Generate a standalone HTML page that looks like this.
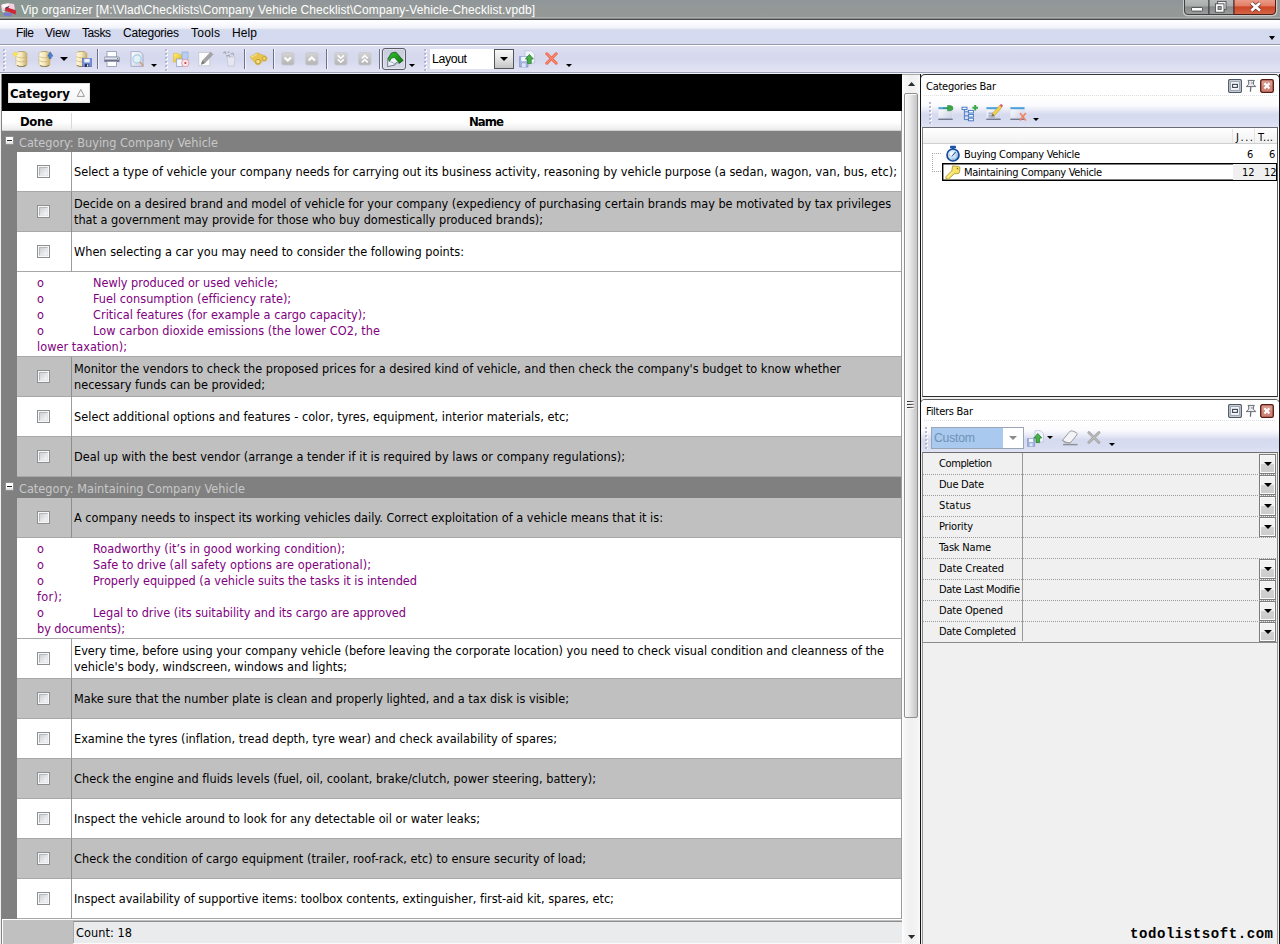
<!DOCTYPE html>
<html lang="en"><head><meta charset="utf-8"><title>Vip organizer</title>
<style>
html,body{margin:0;padding:0;}
body{width:1280px;height:944px;position:relative;overflow:hidden;background:#f0f0f0;}
#root{position:absolute;left:0;top:0;width:1280px;height:944px;overflow:hidden;}
#root div,#root span,#root svg{position:absolute;box-sizing:border-box;}
#root span{white-space:pre;}

</style></head><body><div id="root">
<svg width="0" height="0" style="left:0;top:0"><defs>
<linearGradient id="gc" x1="0" x2="1" y1="0" y2="0"><stop offset="0" stop-color="#fffbea"/><stop offset=".5" stop-color="#f5e7b8"/><stop offset="1" stop-color="#c2aa6c"/></linearGradient>
<linearGradient id="gb" x1="0" x2="0" y1="0" y2="1"><stop offset="0" stop-color="#d4d4d4"/><stop offset="1" stop-color="#b4b4b4"/></linearGradient>
<linearGradient id="gw" x1="0" x2="1" y1="0" y2="1"><stop offset="0" stop-color="#ffffff"/><stop offset="1" stop-color="#c9cfe4"/></linearGradient>
<linearGradient id="gg" x1="0" x2="1" y1="0" y2="1"><stop offset="0" stop-color="#35c235"/><stop offset="1" stop-color="#0a7a0a"/></linearGradient>
<linearGradient id="gy" x1="0" x2="1" y1="0" y2="1"><stop offset="0" stop-color="#fff27a"/><stop offset="1" stop-color="#d8a818"/></linearGradient>
<radialGradient id="gs" cx=".4" cy=".4" r=".7"><stop offset="0" stop-color="#ffffff"/><stop offset=".6" stop-color="#b8dcf8"/><stop offset="1" stop-color="#3c86d0"/></radialGradient>
</defs></svg>
<div style="left:0px;top:0px;width:1280px;height:18px;background:linear-gradient(90deg,rgba(110,150,118,.35),rgba(120,140,128,0) 5%),linear-gradient(#90959a,#949998 50%,#959a99);"></div>
<div style="left:0px;top:17px;width:1280px;height:1px;background:#a9adab;"></div>
<div style="left:0px;top:18px;width:1280px;height:1px;background:#8c8e8d;"></div>
<div style="left:0px;top:19px;width:1280px;height:1px;background:#48494a;"></div>
<svg style="left:0px;top:2px;" width="18" height="15" viewBox="0 0 18 15"><path d="M1 3 Q6 0 14 2 L15 8 Q8 5 2 9 Z" fill="#f6cfe0"/><path d="M2 2.4 L9 1.6 L8 5 L3 6Z" fill="#fff" opacity=".8"/><path d="M6 5 L16 8.6 L15.6 12.4 L5 8.4 Z" fill="#d02434"/><path d="M5.4 6.6 L9 4.4" stroke="#3a3a3a" stroke-width="1.2"/><path d="M3 10.4 L12 11.6 L11 14.4 L4 13.6 Z" fill="#7a7ad0"/><path d="M1.4 8.6 L5 8.8 L4 11 Z" fill="#f4e8f0"/></svg>
<svg style="left:1183px;top:0px;" width="95" height="17" viewBox="0 0 95 17"><defs><linearGradient id="wb" x1="0" x2="0" y1="0" y2="1"><stop offset="0" stop-color="#b9bdbc"/><stop offset=".46" stop-color="#a9adac"/><stop offset=".5" stop-color="#868a89"/><stop offset="1" stop-color="#9a9e9d"/></linearGradient>
<linearGradient id="wc" x1="0" x2="0" y1="0" y2="1"><stop offset="0" stop-color="#eda08c"/><stop offset=".46" stop-color="#e07c64"/><stop offset=".5" stop-color="#cf4424"/><stop offset="1" stop-color="#d2664a"/></linearGradient></defs>
<path d="M.5 -1 V11 Q.5 15.5 5 15.5 H89 Q93.5 15.5 93.5 11 V-1 Z" fill="none" stroke="#c8cbca" stroke-width="1.4"/>
<path d="M1.5 -1 V11 Q1.5 14.5 5 14.5 H26 V-1 Z" fill="url(#wb)" stroke="#3e4142" stroke-width="1"/>
<path d="M26 -1 V14.5 H51 V-1 Z" fill="url(#wb)" stroke="#3e4142" stroke-width="1"/>
<path d="M51 -1 V14.5 H89 Q92.5 14.5 92.5 11 V-1 Z" fill="url(#wc)" stroke="#4a2018" stroke-width="1"/>
<rect x="8.5" y="7.5" width="11" height="3.6" rx=".6" fill="#fdfdfd" stroke="#4c4f50" stroke-width=".9"/>
<rect x="34.6" y="1.4" width="8.4" height="8" fill="#f4f4f4" stroke="#4c4f50" stroke-width=".9"/>
<rect x="32.4" y="3.8" width="8.6" height="8.4" fill="#fdfdfd" stroke="#4c4f50" stroke-width=".9"/>
<rect x="35" y="6.6" width="3.2" height="2.8" fill="#9a9e9d" stroke="#4c4f50" stroke-width=".8"/>
<path d="M68.4 3 L77 10.6 M77 3 L68.4 10.6" stroke="#5a2a20" stroke-width="4.2"/>
<path d="M68.4 3 L77 10.6 M77 3 L68.4 10.6" stroke="#ffffff" stroke-width="2.8"/></svg>
<div style="left:0px;top:20px;width:1280px;height:24px;background:linear-gradient(#ffffff,#fafbfe 4px,#f1f2fa 8px,#d9deef 9.5px,#d3d9ee 12px,#d5daef);"></div>
<div style="left:0px;top:44px;width:1280px;height:1px;background:#9599b0;"></div>
<div style="left:0px;top:45px;width:1280px;height:1px;background:#ffffff;"></div>
<div style="left:0px;top:46px;width:1280px;height:26px;background:linear-gradient(#dee0f2,#d7d9ee 30%,#d6d8ee 55%,#e3e5f5);"></div>
<div style="left:0px;top:72px;width:1280px;height:1px;background:#9da1b8;"></div>
<div style="left:0px;top:73px;width:1280px;height:1px;background:#f4f4f8;"></div>
<div style="left:3px;top:49px;width:3px;height:22px;background-image:radial-gradient(circle at 1px 1px,#b4b8d0 0,#b4b8d0 .8px,transparent 1.1px),radial-gradient(circle at 2px 2px,#ffffff 0,#ffffff .9px,transparent 1.2px);background-size:3px 4px;"></div>
<svg style="left:12px;top:51px;" width="16" height="16" viewBox="0 0 16 16"><path d="M4 2.5 C4 -0.3 15 -0.3 15 2.5 V13.5 C15 16.3 4 16.3 4 13.5 Z" fill="url(#gc)" stroke="#c8b070" stroke-width=".6"/><path d="M4.5 5.5 C6 7.3 13 7.3 14.5 5.5 M4.5 9.5 C6 11.3 13 11.3 14.5 9.5" fill="none" stroke="#cdb068" stroke-width=".9" opacity=".8"/><path d="M5 14.3 C7 16 12 16 14 14.3" fill="none" stroke="#6e6340" stroke-width="1" opacity=".75"/><path d="M6.5 1 C8 .2 11 .2 12.5 1" fill="none" stroke="#9c8a5a" stroke-width=".8" opacity=".7"/><path d="M3.2 0.3 L4.1 2.6 L6.6 3.2 L4.1 3.9 L3.2 6.3 L2.4 3.9 L0 3.2 L2.4 2.6 Z" fill="#ffe94a" stroke="#f0d23a" stroke-width=".4"/></svg>
<svg style="left:38px;top:51px;" width="16" height="16" viewBox="0 0 16 16"><path d="M1 2.5 C1 -0.3 12 -0.3 12 2.5 V13.5 C12 16.3 1 16.3 1 13.5 Z" fill="url(#gc)" stroke="#c8b070" stroke-width=".6"/><path d="M1.5 5.5 C3 7.3 10 7.3 11.5 5.5 M1.5 9.5 C3 11.3 10 11.3 11.5 9.5" fill="none" stroke="#cdb068" stroke-width=".9" opacity=".8"/><path d="M2 14.3 C4 16 9 16 11 14.3" fill="none" stroke="#6e6340" stroke-width="1" opacity=".75"/><path d="M3.5 1 C5 .2 8 .2 9.5 1" fill="none" stroke="#9c8a5a" stroke-width=".8" opacity=".7"/><path d="M12.2 0.8 L15 5.2 L13.2 5.2 L13.2 7.6 L11 7.6 L11 5.2 L9.6 5.2 Z" fill="#4a7fd0" stroke="#2d5aa8" stroke-width=".5"/></svg>
<div style="left:60px;top:57px;width:0px;height:0px;border-left:4.0px solid transparent;border-right:4.0px solid transparent;border-top:4px solid #000;"></div>
<svg style="left:76px;top:51px;" width="16" height="16" viewBox="0 0 16 16"><path d="M0 2.5 C0 -0.3 11 -0.3 11 2.5 V13.5 C11 16.3 0 16.3 0 13.5 Z" fill="url(#gc)" stroke="#c8b070" stroke-width=".6"/><path d="M0.5 5.5 C2 7.3 9 7.3 10.5 5.5 M0.5 9.5 C2 11.3 9 11.3 10.5 9.5" fill="none" stroke="#cdb068" stroke-width=".9" opacity=".8"/><path d="M1 14.3 C3 16 8 16 10 14.3" fill="none" stroke="#6e6340" stroke-width="1" opacity=".75"/><path d="M2.5 1 C4 .2 7 .2 8.5 1" fill="none" stroke="#9c8a5a" stroke-width=".8" opacity=".7"/><rect x="6.5" y="7.5" width="9" height="8.5" fill="#7890d8" stroke="#5068b4" stroke-width=".6"/><rect x="8.3" y="7.8" width="5.4" height="3.6" fill="#eef2fc"/><rect x="8.8" y="12.8" width="4.4" height="3.2" fill="#27305c"/><rect x="11" y="13.4" width="1.4" height="2.2" fill="#e8ecf8"/></svg>
<div style="left:97px;top:49px;width:1px;height:20px;background:#6c7088;"></div>
<div style="left:98px;top:49px;width:1px;height:20px;background:rgba(255,255,255,.7);"></div>
<svg style="left:104px;top:51px;" width="16" height="16" viewBox="0 0 16 16"><rect x="3" y="0.6" width="9.4" height="5.4" fill="#fff" stroke="#8c94b4" stroke-width=".8"/><path d="M1 6 H14.4 Q15.4 6 15.4 7 V10.6 H0.2 V7 Q0.2 6 1 6Z" fill="#dfe3f0" stroke="#7a829c" stroke-width=".7"/><rect x="0.6" y="8.6" width="14.4" height="2" fill="#6a6f86"/><rect x="3" y="10.4" width="9.4" height="5" fill="#fff" stroke="#8c94b4" stroke-width=".8"/><rect x="13" y="7" width="1.2" height="1" fill="#4aa04a"/></svg>
<svg style="left:129px;top:51px;" width="16" height="16" viewBox="0 0 16 16"><path d="M2 .6 H11 L14 3.4 V15.4 H2 Z" fill="url(#gw)" stroke="#9aa2c0" stroke-width=".8"/><circle cx="8" cy="8" r="4.1" fill="#e2f1f8" stroke="#a4cde4" stroke-width="1.2" opacity=".95"/><path d="M11 11.2 L14.2 14.6" stroke="#d0a070" stroke-width="1.5" stroke-linecap="round"/></svg>
<div style="left:151px;top:64px;width:0px;height:0px;border-left:3.0px solid transparent;border-right:3.0px solid transparent;border-top:3px solid #000;"></div>
<div style="left:165px;top:49px;width:3px;height:22px;background-image:radial-gradient(circle at 1px 1px,#b4b8d0 0,#b4b8d0 .8px,transparent 1.1px),radial-gradient(circle at 2px 2px,#ffffff 0,#ffffff .9px,transparent 1.2px);background-size:3px 4px;"></div>
<svg style="left:173px;top:51px;" width="17" height="16" viewBox="0 0 17 16"><path d="M.6 2.4 H5 L6.2 3.8 H10.8 V11 H.6 Z" fill="url(#gy)" stroke="#d8b830" stroke-width=".6"/><rect x="9" y="1" width="6" height="8" fill="#b8cdf0" stroke="#8aa4d8" stroke-width=".6"/><rect x="3.4" y="8" width="6.4" height="7.4" fill="#f4f6ff" stroke="#8a9ac8" stroke-width=".7"/><circle cx="12.3" cy="12" r="3.7" fill="#fde8ea" stroke="#e0a0a8" stroke-width="1"/><circle cx="12.4" cy="12" r="1.1" fill="#c03848"/></svg>
<svg style="left:198px;top:51px;" width="16" height="16" viewBox="0 0 16 16"><rect x=".8" y="1.4" width="11" height="13.4" fill="#fdfdfd" stroke="#c4c6cc" stroke-width=".8"/><path d="M3.2 13.4 L4.4 9.8 L12.6 1.2 L15 3.4 L6.8 12 Z" fill="#a4a4a4" stroke="#8c8c8c" stroke-width=".5"/><path d="M3.2 13.4 L4.4 9.8 L6.8 12 Z" fill="#787878"/></svg>
<svg style="left:222px;top:51px;" width="16" height="16" viewBox="0 0 16 16"><path d="M5 6 H13 L12.2 15 H5.8 Z" fill="#e6e7ee" stroke="#c4c6d2" stroke-width=".8"/><path d="M1.2 2 L3 1 L4 3 M5.6 1.4 L7.4 .8 M8.6 3 L10.6 2.2 L12 4.4 M4 5.2 L7 4.2 L8.2 6" stroke="#a8a8b0" stroke-width="1.3" fill="none"/></svg>
<div style="left:244px;top:49px;width:1px;height:20px;background:#6c7088;"></div>
<div style="left:245px;top:49px;width:1px;height:20px;background:rgba(255,255,255,.7);"></div>
<svg style="left:249px;top:52px;" width="19" height="14" viewBox="0 0 19 14"><path d="M1 5.2 L7.4 1.2 Q9 .6 10.2 1.6 L13 3 Q17.6 3.6 18 6.4 Q18 9.4 14.6 9.2 L12.4 8.6 Q12.4 12.8 8.8 12.8 Q6.4 12.8 5.8 10.2 Z" fill="#e8c550" stroke="#cfa838" stroke-width=".6"/><circle cx="9" cy="9.6" r="2.3" fill="#f6e08a" stroke="#b08818" stroke-width=".7"/><circle cx="15.2" cy="6.4" r="1.9" fill="#f2d770" stroke="#b08818" stroke-width=".6"/><path d="M2 5.4 L8 2" stroke="#f8e9a0" stroke-width="1"/></svg>
<div style="left:273px;top:49px;width:1px;height:20px;background:#6c7088;"></div>
<div style="left:274px;top:49px;width:1px;height:20px;background:rgba(255,255,255,.7);"></div>
<svg style="left:281px;top:52px;" width="14" height="14" viewBox="0 0 14 14"><rect x=".5" y=".5" width="12.6" height="12.6" rx="2" fill="url(#gb)" stroke="#c8cad4" stroke-width=".8"/><path d="M3.6 5.6 L6.8 8.6 L10 5.6" fill="none" stroke="#fff" stroke-width="2"/></svg>
<svg style="left:305px;top:52px;" width="14" height="14" viewBox="0 0 14 14"><rect x=".5" y=".5" width="12.6" height="12.6" rx="2" fill="url(#gb)" stroke="#c8cad4" stroke-width=".8"/><path d="M3.6 8.4 L6.8 5.4 L10 8.4" fill="none" stroke="#fff" stroke-width="2"/></svg>
<div style="left:326px;top:49px;width:1px;height:20px;background:#6c7088;"></div>
<div style="left:327px;top:49px;width:1px;height:20px;background:rgba(255,255,255,.7);"></div>
<svg style="left:334px;top:52px;" width="14" height="14" viewBox="0 0 14 14"><rect x=".5" y=".5" width="12.6" height="12.6" rx="2" fill="url(#gb)" stroke="#c8cad4" stroke-width=".8"/><path d="M3.8 3.4 L6.8 6.2 L9.8 3.4 M3.8 7.4 L6.8 10.2 L9.8 7.4" fill="none" stroke="#fff" stroke-width="1.5"/></svg>
<svg style="left:358px;top:52px;" width="14" height="14" viewBox="0 0 14 14"><rect x=".5" y=".5" width="12.6" height="12.6" rx="2" fill="url(#gb)" stroke="#c8cad4" stroke-width=".8"/><path d="M3.8 6.4 L6.8 3.6 L9.8 6.4 M3.8 10.4 L6.8 7.6 L9.8 10.4" fill="none" stroke="#fff" stroke-width="1.5"/></svg>
<div style="left:379px;top:49px;width:1px;height:20px;background:#6c7088;"></div>
<div style="left:380px;top:49px;width:1px;height:20px;background:rgba(255,255,255,.7);"></div>
<div style="left:382px;top:48px;width:24px;height:22px;border:1px solid #5a5c68;border-radius:3px;background:linear-gradient(#c9ccdc,#d8daea);box-shadow:inset 0 0 0 1px rgba(255,255,255,.35);"></div>
<svg style="left:386px;top:51px;" width="18" height="17" viewBox="0 0 18 17"><path d="M1.6 15.6 L1.8 7.6 L5.4 2 L9.8 1.2 L17 9.4 L13.4 12.2 L10 11.6 L9 14 Z" fill="#eef1f8" stroke="#5c6270" stroke-width=".8"/><path d="M2.2 7.6 L5.6 1.9 L10 1.2 L17 9.4 L13.4 12.2 L8.4 6.4 L5.4 7.2 L3.4 10.6 Z" fill="url(#gg)" stroke="#0c5c0c" stroke-width=".6"/><path d="M4.4 10.6 L8.4 12.4 L8 14" fill="none" stroke="#8ca0c8" stroke-width=".8"/></svg>
<div style="left:409px;top:64px;width:0px;height:0px;border-left:3.0px solid transparent;border-right:3.0px solid transparent;border-top:3px solid #000;"></div>
<div style="left:424px;top:49px;width:3px;height:22px;background-image:radial-gradient(circle at 1px 1px,#b4b8d0 0,#b4b8d0 .8px,transparent 1.1px),radial-gradient(circle at 2px 2px,#ffffff 0,#ffffff .9px,transparent 1.2px);background-size:3px 4px;"></div>
<div style="left:430px;top:49px;width:64px;height:20px;background:#fff;"></div>
<div style="left:494px;top:49px;width:20px;height:20px;border:1px solid #55565c;background:linear-gradient(#f8f8f8,#e4e4e4 50%,#c4c4c4);"></div>
<div style="left:500px;top:57px;width:0px;height:0px;border-left:4.0px solid transparent;border-right:4.0px solid transparent;border-top:4px solid #000;"></div>
<svg style="left:519px;top:50px;" width="17" height="18" viewBox="0 0 17 18"><path d="M6 .8 H12.4 L15.6 4 V13 H6 Z" fill="#f2f5fc" stroke="#b4bcd8" stroke-width=".7"/><path d="M.6 6.6 H9 V17 H.6 Z" fill="#a4b4e0" stroke="#7088c4" stroke-width=".6"/><rect x="2.2" y="6.8" width="5.2" height="4.4" fill="#f4f6fc"/><rect x="3" y="13.4" width="3.6" height="3.6" fill="#dfe5f5"/><path d="M10.4 4.4 L14.4 9 H12.2 V13.6 H8.6 V9 H6.4 Z" fill="#48b048" stroke="#1c7c1c" stroke-width=".7"/></svg>
<svg style="left:545px;top:52px;" width="13" height="13" viewBox="0 0 13 13"><path d="M1.8 1.8 L11.2 11.2 M11.2 1.8 L1.8 11.2" stroke="#f06a50" stroke-width="3" stroke-linecap="round"/><path d="M1.8 1.8 L11.2 11.2 M11.2 1.8 L1.8 11.2" stroke="#f89878" stroke-width="1" stroke-linecap="round"/></svg>
<div style="left:566px;top:64px;width:0px;height:0px;border-left:3.0px solid transparent;border-right:3.0px solid transparent;border-top:3px solid #000;"></div>
<div style="left:1269px;top:36px;width:0px;height:0px;border-left:3.5px solid transparent;border-right:3.5px solid transparent;border-top:4px solid #000;"></div>
<div style="left:0px;top:74px;width:1px;height:870px;background:#f0f0f0;"></div>
<div style="left:1px;top:74px;width:1px;height:870px;background:#828282;"></div>
<div style="left:2px;top:74px;width:900px;height:37px;background:#000;"></div>
<div style="left:8px;top:83px;width:82px;height:20px;background:linear-gradient(#ffffff,#f4f4f4);border:1px solid #e0e0e0;"></div>
<svg style="left:76px;top:88px;" width="10" height="10" viewBox="0 0 10 10"><path d="M1.2 8.4 L4.8 1.4 L8.4 8.4 Z" fill="none" stroke="#9a9a9a" stroke-width="1"/></svg>
<div style="left:2px;top:111px;width:900px;height:20px;background:linear-gradient(#ffffff 60%,#ececec);border-bottom:1px solid #d0d0d0;"></div>
<div style="left:71px;top:113px;width:1px;height:16px;background:#d8d8d8;"></div>
<div style="left:2px;top:131px;width:900px;height:21px;background:#808080;"></div>
<div style="left:5px;top:136px;width:9px;height:9px;background:linear-gradient(#fff 50%,#d8d8d8);border:1px solid #909090;"></div>
<div style="left:7px;top:140px;width:5px;height:1px;background:#222;"></div>
<div style="left:2px;top:152px;width:15px;height:325px;background:#808080;"></div>
<div style="left:17px;top:152px;width:885px;height:40px;background:#fff;border-bottom:1px solid #a8a8a8;"></div>
<div style="left:71px;top:152px;width:1px;height:40px;background:#9c9c9c;"></div>
<div style="left:37px;top:165px;width:13px;height:13px;background:#f8f8f8;border:1px solid #8e8f8f;"><div style="left:1px;top:1px;width:9px;height:9px;border:1px solid;border-color:#b4b8bc #e6e7e8 #e6e7e8 #b4b8bc;background:linear-gradient(135deg,#cdd0d5,#f7f7f7);"></div></div>
<div style="left:17px;top:192px;width:885px;height:40px;background:#c0c0c0;border-bottom:1px solid #a8a8a8;"></div>
<div style="left:71px;top:192px;width:1px;height:40px;background:#8e8e8e;"></div>
<div style="left:37px;top:205px;width:13px;height:13px;background:#f8f8f8;border:1px solid #8e8f8f;"><div style="left:1px;top:1px;width:9px;height:9px;border:1px solid;border-color:#b4b8bc #e6e7e8 #e6e7e8 #b4b8bc;background:linear-gradient(135deg,#cdd0d5,#f7f7f7);"></div></div>
<div style="left:17px;top:232px;width:885px;height:40px;background:#fff;border-bottom:1px solid #a8a8a8;"></div>
<div style="left:71px;top:232px;width:1px;height:40px;background:#9c9c9c;"></div>
<div style="left:37px;top:245px;width:13px;height:13px;background:#f8f8f8;border:1px solid #8e8f8f;"><div style="left:1px;top:1px;width:9px;height:9px;border:1px solid;border-color:#b4b8bc #e6e7e8 #e6e7e8 #b4b8bc;background:linear-gradient(135deg,#cdd0d5,#f7f7f7);"></div></div>
<div style="left:17px;top:272px;width:885px;height:85px;background:#fff;border-bottom:1px solid #a8a8a8;"></div>
<div style="left:17px;top:357px;width:885px;height:40px;background:#c0c0c0;border-bottom:1px solid #a8a8a8;"></div>
<div style="left:71px;top:357px;width:1px;height:40px;background:#8e8e8e;"></div>
<div style="left:37px;top:370px;width:13px;height:13px;background:#f8f8f8;border:1px solid #8e8f8f;"><div style="left:1px;top:1px;width:9px;height:9px;border:1px solid;border-color:#b4b8bc #e6e7e8 #e6e7e8 #b4b8bc;background:linear-gradient(135deg,#cdd0d5,#f7f7f7);"></div></div>
<div style="left:17px;top:397px;width:885px;height:40px;background:#fff;border-bottom:1px solid #a8a8a8;"></div>
<div style="left:71px;top:397px;width:1px;height:40px;background:#9c9c9c;"></div>
<div style="left:37px;top:410px;width:13px;height:13px;background:#f8f8f8;border:1px solid #8e8f8f;"><div style="left:1px;top:1px;width:9px;height:9px;border:1px solid;border-color:#b4b8bc #e6e7e8 #e6e7e8 #b4b8bc;background:linear-gradient(135deg,#cdd0d5,#f7f7f7);"></div></div>
<div style="left:17px;top:437px;width:885px;height:40px;background:#c0c0c0;border-bottom:1px solid #a8a8a8;"></div>
<div style="left:71px;top:437px;width:1px;height:40px;background:#8e8e8e;"></div>
<div style="left:37px;top:450px;width:13px;height:13px;background:#f8f8f8;border:1px solid #8e8f8f;"><div style="left:1px;top:1px;width:9px;height:9px;border:1px solid;border-color:#b4b8bc #e6e7e8 #e6e7e8 #b4b8bc;background:linear-gradient(135deg,#cdd0d5,#f7f7f7);"></div></div>
<div style="left:2px;top:477px;width:900px;height:21px;background:#808080;"></div>
<div style="left:5px;top:482px;width:9px;height:9px;background:linear-gradient(#fff 50%,#d8d8d8);border:1px solid #909090;"></div>
<div style="left:7px;top:486px;width:5px;height:1px;background:#222;"></div>
<div style="left:2px;top:498px;width:15px;height:421px;background:#808080;"></div>
<div style="left:17px;top:498px;width:885px;height:40px;background:#c0c0c0;border-bottom:1px solid #a8a8a8;"></div>
<div style="left:71px;top:498px;width:1px;height:40px;background:#8e8e8e;"></div>
<div style="left:37px;top:511px;width:13px;height:13px;background:#f8f8f8;border:1px solid #8e8f8f;"><div style="left:1px;top:1px;width:9px;height:9px;border:1px solid;border-color:#b4b8bc #e6e7e8 #e6e7e8 #b4b8bc;background:linear-gradient(135deg,#cdd0d5,#f7f7f7);"></div></div>
<div style="left:17px;top:538px;width:885px;height:101px;background:#fff;border-bottom:1px solid #a8a8a8;"></div>
<div style="left:17px;top:639px;width:885px;height:40px;background:#fff;border-bottom:1px solid #a8a8a8;"></div>
<div style="left:71px;top:639px;width:1px;height:40px;background:#9c9c9c;"></div>
<div style="left:37px;top:652px;width:13px;height:13px;background:#f8f8f8;border:1px solid #8e8f8f;"><div style="left:1px;top:1px;width:9px;height:9px;border:1px solid;border-color:#b4b8bc #e6e7e8 #e6e7e8 #b4b8bc;background:linear-gradient(135deg,#cdd0d5,#f7f7f7);"></div></div>
<div style="left:17px;top:679px;width:885px;height:40px;background:#c0c0c0;border-bottom:1px solid #a8a8a8;"></div>
<div style="left:71px;top:679px;width:1px;height:40px;background:#8e8e8e;"></div>
<div style="left:37px;top:692px;width:13px;height:13px;background:#f8f8f8;border:1px solid #8e8f8f;"><div style="left:1px;top:1px;width:9px;height:9px;border:1px solid;border-color:#b4b8bc #e6e7e8 #e6e7e8 #b4b8bc;background:linear-gradient(135deg,#cdd0d5,#f7f7f7);"></div></div>
<div style="left:17px;top:719px;width:885px;height:40px;background:#fff;border-bottom:1px solid #a8a8a8;"></div>
<div style="left:71px;top:719px;width:1px;height:40px;background:#9c9c9c;"></div>
<div style="left:37px;top:732px;width:13px;height:13px;background:#f8f8f8;border:1px solid #8e8f8f;"><div style="left:1px;top:1px;width:9px;height:9px;border:1px solid;border-color:#b4b8bc #e6e7e8 #e6e7e8 #b4b8bc;background:linear-gradient(135deg,#cdd0d5,#f7f7f7);"></div></div>
<div style="left:17px;top:759px;width:885px;height:40px;background:#c0c0c0;border-bottom:1px solid #a8a8a8;"></div>
<div style="left:71px;top:759px;width:1px;height:40px;background:#8e8e8e;"></div>
<div style="left:37px;top:772px;width:13px;height:13px;background:#f8f8f8;border:1px solid #8e8f8f;"><div style="left:1px;top:1px;width:9px;height:9px;border:1px solid;border-color:#b4b8bc #e6e7e8 #e6e7e8 #b4b8bc;background:linear-gradient(135deg,#cdd0d5,#f7f7f7);"></div></div>
<div style="left:17px;top:799px;width:885px;height:40px;background:#fff;border-bottom:1px solid #a8a8a8;"></div>
<div style="left:71px;top:799px;width:1px;height:40px;background:#9c9c9c;"></div>
<div style="left:37px;top:812px;width:13px;height:13px;background:#f8f8f8;border:1px solid #8e8f8f;"><div style="left:1px;top:1px;width:9px;height:9px;border:1px solid;border-color:#b4b8bc #e6e7e8 #e6e7e8 #b4b8bc;background:linear-gradient(135deg,#cdd0d5,#f7f7f7);"></div></div>
<div style="left:17px;top:839px;width:885px;height:40px;background:#c0c0c0;border-bottom:1px solid #a8a8a8;"></div>
<div style="left:71px;top:839px;width:1px;height:40px;background:#8e8e8e;"></div>
<div style="left:37px;top:852px;width:13px;height:13px;background:#f8f8f8;border:1px solid #8e8f8f;"><div style="left:1px;top:1px;width:9px;height:9px;border:1px solid;border-color:#b4b8bc #e6e7e8 #e6e7e8 #b4b8bc;background:linear-gradient(135deg,#cdd0d5,#f7f7f7);"></div></div>
<div style="left:17px;top:879px;width:885px;height:40px;background:#fff;border-bottom:1px solid #a8a8a8;"></div>
<div style="left:71px;top:879px;width:1px;height:40px;background:#9c9c9c;"></div>
<div style="left:37px;top:892px;width:13px;height:13px;background:#f8f8f8;border:1px solid #8e8f8f;"><div style="left:1px;top:1px;width:9px;height:9px;border:1px solid;border-color:#b4b8bc #e6e7e8 #e6e7e8 #b4b8bc;background:linear-gradient(135deg,#cdd0d5,#f7f7f7);"></div></div>
<div style="left:2px;top:919px;width:900px;height:1px;background:#fdfdfd;"></div>
<div style="left:2px;top:920px;width:900px;height:24px;background:#c0c0c0;"></div>
<div style="left:2px;top:920px;width:1px;height:24px;background:#fff;"></div>
<div style="left:73px;top:921px;width:829px;height:22px;background:#e9ebed;border-top:1px solid #8e8e8e;border-left:1px solid #a8a8a8;"></div>
<div style="left:73px;top:943px;width:829px;height:1px;background:#fafafa;"></div>
<div style="left:901px;top:111px;width:1px;height:808px;background:#9c9c9c;"></div>
<div style="left:902px;top:74px;width:18px;height:870px;background:linear-gradient(90deg,#ffffff,#f6f6f6 15%,#f0f0f0 50%,#f4f4f4 85%,#fbfbfb);"></div>
<div style="left:902px;top:74px;width:18px;height:1px;background:#a8a8a8;"></div>
<svg style="left:907px;top:81px;" width="10" height="6" viewBox="0 0 10 6"><path d="M1 5 L4.6 1 L8.2 5 Z" fill="#2c2c2c"/></svg>
<div style="left:904px;top:93px;width:14px;height:625px;background:linear-gradient(90deg,#f7f7f7,#ececec 35%,#d4d4d6 75%,#c6c6c9);border:1px solid #8f8f8f;border-radius:2px;box-shadow:inset 1px 1px 0 #fcfcfc;"></div>
<div style="left:907px;top:401px;width:7px;height:1px;background:linear-gradient(90deg,#2a2a2a,#555 60%,#9a9a9a);"></div>
<div style="left:907px;top:402px;width:7px;height:1px;background:#f6f6f6;"></div>
<div style="left:907px;top:404px;width:7px;height:1px;background:linear-gradient(90deg,#2a2a2a,#555 60%,#9a9a9a);"></div>
<div style="left:907px;top:405px;width:7px;height:1px;background:#f6f6f6;"></div>
<div style="left:907px;top:407px;width:7px;height:1px;background:linear-gradient(90deg,#2a2a2a,#555 60%,#9a9a9a);"></div>
<div style="left:907px;top:408px;width:7px;height:1px;background:#f6f6f6;"></div>
<svg style="left:907px;top:934px;" width="10" height="6" viewBox="0 0 10 6"><path d="M1 1 L8.2 1 L4.6 5 Z" fill="#2c2c2c"/></svg>
<div style="left:920px;top:74px;width:360px;height:870px;background:#f0f0f0;border-left:1px solid #141414;border-right:1px solid #141414;"></div>
<div style="left:920px;top:74px;width:360px;height:324px;background:#fff;border:1px solid #35373c;border-left-color:#141414;border-right-color:#141414;border-bottom:none;border-radius:5px 5px 0 0;"></div>
<div style="left:921px;top:397px;width:358px;height:2px;background:#f0f0f0;"></div>
<svg style="left:1228px;top:79px;" width="14" height="14" viewBox="0 0 14 14"><rect x=".7" y=".7" width="12.6" height="12.6" rx="1" fill="#f4f6f9" stroke="#4c5866" stroke-width="1.3"/><rect x="2.6" y="2.6" width="8.8" height="8.8" fill="none" stroke="#8e99a8" stroke-width=".9"/><rect x="4.6" y="5.4" width="4.8" height="3" fill="#fff" stroke="#3c4654" stroke-width="1.1"/></svg>
<svg style="left:1245px;top:79px;" width="12" height="14" viewBox="0 0 12 14"><path d="M3 1.4 H9.4 L8.4 3 L8.6 5.4 L10.8 7.6 H1.2 L3.6 5.4 L3.8 3 Z" fill="#e9e9ee" stroke="#6a6e78" stroke-width="1"/><path d="M5.8 7.8 L5.4 12.8" stroke="#6a6e78" stroke-width="1.3"/><circle cx="6.9" cy="3.9" r=".9" fill="#a0a4ae"/></svg>
<svg style="left:1260px;top:79px;" width="14" height="14" viewBox="0 0 14 14"><rect x=".7" y=".7" width="12.6" height="12.6" rx="1.6" fill="#cf8377" stroke="#581a12" stroke-width="1.3"/><rect x="1.8" y="1.8" width="10.4" height="5" rx="1" fill="#e1a99c" opacity=".55"/><path d="M4.4 4.2 L9.4 9.4 M9.4 4.2 L4.4 9.4" stroke="#fff" stroke-width="2.1"/></svg>
<div style="left:924px;top:95px;width:353px;height:1px;background-image:linear-gradient(90deg,#dcdfe6 50%,transparent 50%);background-size:2px 1px;"></div>
<div style="left:921px;top:96px;width:358px;height:31px;background:linear-gradient(#ffffff,#fbfbfe 30%,#e9ebf6 45%,#d6daef 60%,#d9ddf1 85%,#e0e3f4);"></div>
<div style="left:922px;top:127px;width:356px;height:270px;background:#fff;border:1px solid #808080;border-top-color:#6a6c72;border-right-color:#5a5a5a;border-bottom-color:#2c2c2c;"></div>
<div style="left:929px;top:102px;width:3px;height:22px;background-image:radial-gradient(circle at 1px 1px,#b4b8d0 0,#b4b8d0 .8px,transparent 1.1px),radial-gradient(circle at 2px 2px,#ffffff 0,#ffffff .9px,transparent 1.2px);background-size:3px 4px;"></div>
<svg style="left:938px;top:104px;" width="17" height="17" viewBox="0 0 17 17"><path d="M.5 3.5 H14.5 V15 H.5 Z" fill="url(#gw)" stroke="#dfe4f0" stroke-width=".6"/><rect x=".5" y="3.2" width="14" height="2" fill="#4aa0dc"/><rect x=".3" y="14.6" width="14.4" height="1.3" fill="#6a7088"/><path d="M5 4.2 H10" stroke="#2b9a4a" stroke-width="1.3"/><path d="M9.4 1.6 H12.4 Q15 2 15 4.2 Q15 6.4 12.4 6.8 H9.4 Q10.6 4.2 9.4 1.6Z" fill="#3aa846" stroke="#1e7a2c" stroke-width=".5"/></svg>
<svg style="left:961px;top:104px;" width="18" height="18" viewBox="0 0 18 18"><g fill="#f2f6fd" stroke="#3f73c0" stroke-width=".9"><rect x="1" y="3.2" width="5" height="2.4"/><rect x="7.4" y="6.4" width="5" height="2.6"/><rect x="7.4" y="10.4" width="5" height="2.6"/><rect x="7.4" y="14.2" width="5" height="2.6"/></g><path d="M3.4 5.6 V15.6 H7.4 M3.4 7.8 H7.4 M3.4 11.8 H7.4" fill="none" stroke="#3f73c0" stroke-width=".9"/><path d="M14.2 1 V6.6 M11.4 3.8 H17" stroke="#3aa846" stroke-width="2"/></svg>
<svg style="left:986px;top:103px;" width="17" height="18" viewBox="0 0 17 18"><path d="M.5 4.5 H14.5 V16 H.5 Z" fill="url(#gw)" stroke="#dfe4f0" stroke-width=".6"/><rect x=".5" y="4.2" width="14" height="2" fill="#4aa0dc"/><rect x=".3" y="15.6" width="14.4" height="1.3" fill="#6a7088"/><path d="M2.4 10.2 H7 M2.4 12.2 H6 M2.4 14 H9" stroke="#6c84b8" stroke-width=".8"/><path d="M5.6 13.4 L6.6 10.4 L13.6 2.4 L15.8 4.4 L8.6 12.4 Z" fill="#f2d34e" stroke="#b89a2c" stroke-width=".6"/><path d="M13.6 2.4 L14.8 1 Q16.4 1 17 2.8 L15.8 4.4Z" fill="#e0606c"/><path d="M5.6 13.4 L6.6 10.4 L8.6 12.4Z" fill="#7a6a50"/></svg>
<svg style="left:1010px;top:105px;" width="18" height="17" viewBox="0 0 18 17"><path d="M.5 2.5 H14.5 V14 H.5 Z" fill="url(#gw)" stroke="#dfe4f0" stroke-width=".6"/><rect x=".5" y="2.2" width="14" height="2" fill="#4aa0dc"/><rect x=".3" y="13.6" width="14.4" height="1.3" fill="#6a7088"/><path d="M10 8 L15.8 15.4 M15.8 8 L10 15.4" stroke="#ee8468" stroke-width="1.7"/></svg>
<div style="left:1033px;top:118px;width:0px;height:0px;border-left:3.0px solid transparent;border-right:3.0px solid transparent;border-top:3px solid #000;"></div>
<div style="left:923px;top:128px;width:354px;height:16px;background:linear-gradient(#ffffff,#f7f7f7 60%,#f0f0f0);border-bottom:1px solid #d0d0d0;"></div>
<div style="left:1232px;top:129px;width:1px;height:14px;background:#e4e4e8;"></div>
<div style="left:1254px;top:129px;width:1px;height:14px;background:#e4e4e8;"></div>
<div style="left:932px;top:153px;width:1px;height:19px;background-image:linear-gradient(180deg,#a8a8a8 50%,transparent 50%);background-size:1px 2px;"></div>
<div style="left:932px;top:153px;width:10px;height:1px;background-image:linear-gradient(90deg,#a8a8a8 50%,transparent 50%);background-size:2px 1px;"></div>
<div style="left:932px;top:171px;width:10px;height:1px;background-image:linear-gradient(90deg,#a8a8a8 50%,transparent 50%);background-size:2px 1px;"></div>
<svg style="left:945px;top:145px;" width="16" height="17" viewBox="0 0 16 17"><rect x="5" y=".8" width="6" height="2.4" rx=".6" fill="#1f56a8"/><rect x="6.8" y="2.6" width="2.4" height="2" fill="#1f56a8"/><circle cx="8" cy="10" r="6" fill="url(#gs)" stroke="#174a9c" stroke-width="1.7"/><path d="M8 10 L10.6 7.2" stroke="#245c9c" stroke-width="1.1"/><path d="M8 10 L6.8 11.6" stroke="#245c9c" stroke-width=".9"/><path d="M3.6 10 H4.8 M11.2 10 H12.4 M8 13.4 V14.4" stroke="#e08070" stroke-width=".9"/></svg>
<div style="left:942px;top:163px;width:335px;height:18px;border:1px solid #000;background:#fff;box-shadow:inset 0 0 0 .4px #000;"></div>
<div style="left:1233px;top:164px;width:43px;height:16px;background:#f0f0f0;"></div>
<svg style="left:945px;top:165px;" width="16" height="15" viewBox="0 0 18 17"><path d="M8.6 1 L15.6 1.6 Q17 2 16.8 3.4 L16.4 8.2 Q16 9.4 14.8 9.6 L10.4 10 L4 16 L1 15.8 L1.2 13 L7.6 6.6 Z" fill="#f7e36a" stroke="#a8901c" stroke-width=".9" stroke-linejoin="round"/><path d="M12.6 3.2 L15 3.4 L14.8 5.8 Z" fill="#8a7418"/><path d="M8.4 8 L2.4 14.4" stroke="#fff8b8" stroke-width="1"/></svg>
<div style="left:920px;top:399px;width:360px;height:545px;background:#f0f0f0;border:1px solid #5c5e62;border-left-color:#141414;border-right-color:#141414;border-bottom:none;border-radius:5px 5px 0 0;"></div>
<div style="left:921px;top:400px;width:358px;height:21px;background:#fff;border-radius:4px 4px 0 0;"></div>
<svg style="left:1228px;top:404px;" width="14" height="14" viewBox="0 0 14 14"><rect x=".7" y=".7" width="12.6" height="12.6" rx="1" fill="#f4f6f9" stroke="#4c5866" stroke-width="1.3"/><rect x="2.6" y="2.6" width="8.8" height="8.8" fill="none" stroke="#8e99a8" stroke-width=".9"/><rect x="4.6" y="5.4" width="4.8" height="3" fill="#fff" stroke="#3c4654" stroke-width="1.1"/></svg>
<svg style="left:1245px;top:404px;" width="12" height="14" viewBox="0 0 12 14"><path d="M3 1.4 H9.4 L8.4 3 L8.6 5.4 L10.8 7.6 H1.2 L3.6 5.4 L3.8 3 Z" fill="#e9e9ee" stroke="#6a6e78" stroke-width="1"/><path d="M5.8 7.8 L5.4 12.8" stroke="#6a6e78" stroke-width="1.3"/><circle cx="6.9" cy="3.9" r=".9" fill="#a0a4ae"/></svg>
<svg style="left:1260px;top:404px;" width="14" height="14" viewBox="0 0 14 14"><rect x=".7" y=".7" width="12.6" height="12.6" rx="1.6" fill="#cf8377" stroke="#581a12" stroke-width="1.3"/><rect x="1.8" y="1.8" width="10.4" height="5" rx="1" fill="#e1a99c" opacity=".55"/><path d="M4.4 4.2 L9.4 9.4 M9.4 4.2 L4.4 9.4" stroke="#fff" stroke-width="2.1"/></svg>
<div style="left:924px;top:420px;width:352px;height:1px;background-image:linear-gradient(90deg,#dcdfe6 50%,transparent 50%);background-size:2px 1px;"></div>
<div style="left:921px;top:421px;width:358px;height:31px;background:linear-gradient(#ffffff,#fbfbfe 30%,#e9ebf6 45%,#d6daef 60%,#d9ddf1 85%,#e0e3f4);"></div>
<div style="left:925px;top:427px;width:3px;height:22px;background-image:radial-gradient(circle at 1px 1px,#b4b8d0 0,#b4b8d0 .8px,transparent 1.1px),radial-gradient(circle at 2px 2px,#ffffff 0,#ffffff .9px,transparent 1.2px);background-size:3px 4px;"></div>
<div style="left:931px;top:427px;width:93px;height:22px;background:#fff;border:1px solid #9aa6b6;"></div>
<div style="left:932px;top:428px;width:71px;height:20px;background:#a9caee;"></div>
<div style="left:1009px;top:436px;width:0px;height:0px;border-left:4.0px solid transparent;border-right:4.0px solid transparent;border-top:4px solid #8a8a8a;"></div>
<svg style="left:1027px;top:430px;" width="18" height="17" viewBox="0 0 18 17"><path d="M8 .6 H13.4 L16.4 3.6 V12 H8 Z" fill="#f2f5fc" stroke="#b4bcd8" stroke-width=".7"/><path d="M.6 8.6 H7.6 V16.4 H.6 Z" fill="#a4b4e0" stroke="#7088c4" stroke-width=".6"/><rect x="2" y="8.8" width="4" height="3.2" fill="#f4f6fc"/><rect x="2.6" y="13.4" width="3" height="3" fill="#dfe5f5"/><path d="M10.8 3.4 L14.8 8 H12.6 V12.6 H9 V8 H6.8 Z" fill="#48b048" stroke="#1c7c1c" stroke-width=".7"/></svg>
<div style="left:1047px;top:436px;width:0px;height:0px;border-left:3.0px solid transparent;border-right:3.0px solid transparent;border-top:3px solid #000;"></div>
<svg style="left:1061px;top:430px;" width="18" height="16" viewBox="0 0 18 16"><path d="M1.4 10.4 L8.8 1.4 Q10 .6 11.6 1 L15.4 2.6 Q16.6 3.6 15.8 5 L9.4 12.8 H4.2 Z" fill="#f4f4f6" stroke="#9a9ca2" stroke-width="1"/><path d="M1.4 10.4 L6.2 12.6 L9.4 12.8" fill="none" stroke="#9a9ca2" stroke-width="1"/><path d="M2 14.6 H16.6" stroke="#8c8e94" stroke-width="1.4"/></svg>
<svg style="left:1087px;top:431px;" width="14" height="13" viewBox="0 0 14 13"><path d="M1.8 1.6 L12 11.4 M12 1.6 L1.8 11.4" stroke="#a6a6a6" stroke-width="2.8" stroke-linecap="round"/><path d="M1.8 1.6 L12 11.4 M12 1.6 L1.8 11.4" stroke="#c6c6c6" stroke-width="1" stroke-linecap="round"/></svg>
<div style="left:1109px;top:443px;width:0px;height:0px;border-left:3.0px solid transparent;border-right:3.0px solid transparent;border-top:3px solid #000;"></div>
<div style="left:922px;top:452px;width:356px;height:492px;background:#f0f0f0;border:1px solid #9a9a9a;border-top:1px solid #6e6e6e;border-bottom:none;"></div>
<div style="left:922px;top:452px;width:356px;height:191px;background:#f0f0f0;border:1px solid #858585;border-top:1px solid #6e6e6e;border-bottom:1px solid #8c8c8c;"></div>
<div style="left:923px;top:474px;width:354px;height:1px;background-image:linear-gradient(90deg,#9c9c9c 50%,transparent 50%);background-size:2px 1px;"></div>
<div style="left:1259px;top:454px;width:17px;height:20px;background:linear-gradient(#f2f2f2 50%,#d2d2d2 50%,#cbcbcb);border:1px solid #7c7c7c;box-shadow:inset 0 0 0 1px #fafafa;"></div>
<div style="left:1264px;top:462px;width:0px;height:0px;border-left:4.0px solid transparent;border-right:4.0px solid transparent;border-top:4px solid #000;"></div>
<div style="left:923px;top:495px;width:354px;height:1px;background-image:linear-gradient(90deg,#9c9c9c 50%,transparent 50%);background-size:2px 1px;"></div>
<div style="left:1259px;top:475px;width:17px;height:20px;background:linear-gradient(#f2f2f2 50%,#d2d2d2 50%,#cbcbcb);border:1px solid #7c7c7c;box-shadow:inset 0 0 0 1px #fafafa;"></div>
<div style="left:1264px;top:483px;width:0px;height:0px;border-left:4.0px solid transparent;border-right:4.0px solid transparent;border-top:4px solid #000;"></div>
<div style="left:923px;top:516px;width:354px;height:1px;background-image:linear-gradient(90deg,#9c9c9c 50%,transparent 50%);background-size:2px 1px;"></div>
<div style="left:1259px;top:496px;width:17px;height:20px;background:linear-gradient(#f2f2f2 50%,#d2d2d2 50%,#cbcbcb);border:1px solid #7c7c7c;box-shadow:inset 0 0 0 1px #fafafa;"></div>
<div style="left:1264px;top:504px;width:0px;height:0px;border-left:4.0px solid transparent;border-right:4.0px solid transparent;border-top:4px solid #000;"></div>
<div style="left:923px;top:537px;width:354px;height:1px;background-image:linear-gradient(90deg,#9c9c9c 50%,transparent 50%);background-size:2px 1px;"></div>
<div style="left:1259px;top:517px;width:17px;height:20px;background:linear-gradient(#f2f2f2 50%,#d2d2d2 50%,#cbcbcb);border:1px solid #7c7c7c;box-shadow:inset 0 0 0 1px #fafafa;"></div>
<div style="left:1264px;top:525px;width:0px;height:0px;border-left:4.0px solid transparent;border-right:4.0px solid transparent;border-top:4px solid #000;"></div>
<div style="left:923px;top:558px;width:354px;height:1px;background-image:linear-gradient(90deg,#9c9c9c 50%,transparent 50%);background-size:2px 1px;"></div>
<div style="left:923px;top:579px;width:354px;height:1px;background-image:linear-gradient(90deg,#9c9c9c 50%,transparent 50%);background-size:2px 1px;"></div>
<div style="left:1259px;top:559px;width:17px;height:20px;background:linear-gradient(#f2f2f2 50%,#d2d2d2 50%,#cbcbcb);border:1px solid #7c7c7c;box-shadow:inset 0 0 0 1px #fafafa;"></div>
<div style="left:1264px;top:567px;width:0px;height:0px;border-left:4.0px solid transparent;border-right:4.0px solid transparent;border-top:4px solid #000;"></div>
<div style="left:923px;top:600px;width:354px;height:1px;background-image:linear-gradient(90deg,#9c9c9c 50%,transparent 50%);background-size:2px 1px;"></div>
<div style="left:1259px;top:580px;width:17px;height:20px;background:linear-gradient(#f2f2f2 50%,#d2d2d2 50%,#cbcbcb);border:1px solid #7c7c7c;box-shadow:inset 0 0 0 1px #fafafa;"></div>
<div style="left:1264px;top:588px;width:0px;height:0px;border-left:4.0px solid transparent;border-right:4.0px solid transparent;border-top:4px solid #000;"></div>
<div style="left:923px;top:621px;width:354px;height:1px;background-image:linear-gradient(90deg,#9c9c9c 50%,transparent 50%);background-size:2px 1px;"></div>
<div style="left:1259px;top:601px;width:17px;height:20px;background:linear-gradient(#f2f2f2 50%,#d2d2d2 50%,#cbcbcb);border:1px solid #7c7c7c;box-shadow:inset 0 0 0 1px #fafafa;"></div>
<div style="left:1264px;top:609px;width:0px;height:0px;border-left:4.0px solid transparent;border-right:4.0px solid transparent;border-top:4px solid #000;"></div>
<div style="left:1259px;top:622px;width:17px;height:20px;background:linear-gradient(#f2f2f2 50%,#d2d2d2 50%,#cbcbcb);border:1px solid #7c7c7c;box-shadow:inset 0 0 0 1px #fafafa;"></div>
<div style="left:1264px;top:630px;width:0px;height:0px;border-left:4.0px solid transparent;border-right:4.0px solid transparent;border-top:4px solid #000;"></div>
<div style="left:1022px;top:453px;width:1px;height:188px;background:#9a9a9a;"></div>
<span style="left:21px;top:2px;font-family:'Liberation Sans', 'DejaVu Sans', sans-serif;font-size:12px;line-height:16px;color:#fff;letter-spacing:0.074px;">Vip organizer [M:\Vlad\Checklists\Company Vehicle Checklist\Company-Vehicle-Checklist.vpdb]</span>
<span style="left:16px;top:25px;font-family:'Liberation Sans', 'DejaVu Sans', sans-serif;font-size:12px;line-height:16px;color:#000;letter-spacing:-0.448px;">File</span>
<span style="left:45px;top:25px;font-family:'Liberation Sans', 'DejaVu Sans', sans-serif;font-size:12px;line-height:16px;color:#000;letter-spacing:-0.266px;">View</span>
<span style="left:82px;top:25px;font-family:'Liberation Sans', 'DejaVu Sans', sans-serif;font-size:12px;line-height:16px;color:#000;letter-spacing:-0.422px;">Tasks</span>
<span style="left:123px;top:25px;font-family:'Liberation Sans', 'DejaVu Sans', sans-serif;font-size:12px;line-height:16px;color:#000;letter-spacing:-0.226px;">Categories</span>
<span style="left:191px;top:25px;font-family:'Liberation Sans', 'DejaVu Sans', sans-serif;font-size:12px;line-height:16px;color:#000;letter-spacing:0.246px;">Tools</span>
<span style="left:232px;top:25px;font-family:'Liberation Sans', 'DejaVu Sans', sans-serif;font-size:12px;line-height:16px;color:#000;letter-spacing:0.104px;">Help</span>
<span style="left:432px;top:51px;font-family:'Liberation Sans', 'DejaVu Sans', sans-serif;font-size:12.3px;line-height:16px;color:#000;letter-spacing:-0.384px;">Layout</span>
<span style="left:10px;top:86px;font-family:'DejaVu Sans Condensed', 'DejaVu Sans', 'Liberation Sans', sans-serif;font-size:13px;line-height:16px;color:#000;font-weight:bold;letter-spacing:0.027px;">Category</span>
<span style="left:20px;top:114px;font-family:'DejaVu Sans Condensed', 'DejaVu Sans', 'Liberation Sans', sans-serif;font-size:13px;line-height:16px;color:#000;font-weight:bold;letter-spacing:-0.339px;">Done</span>
<span style="left:469px;top:114px;font-family:'DejaVu Sans Condensed', 'DejaVu Sans', 'Liberation Sans', sans-serif;font-size:13px;line-height:16px;color:#000;font-weight:bold;letter-spacing:-0.938px;">Name</span>
<span style="left:19px;top:135px;font-family:'DejaVu Sans Condensed', 'DejaVu Sans', 'Liberation Sans', sans-serif;font-size:12.6px;line-height:16px;color:#c8c8c8;letter-spacing:0.001px;">Category: Buying Company Vehicle</span>
<span style="left:74px;top:164px;font-family:'DejaVu Sans Condensed', 'DejaVu Sans', 'Liberation Sans', sans-serif;font-size:12.6px;line-height:16px;color:#000;letter-spacing:0.003px;">Select a type of vehicle your company needs for carrying out its business activity, reasoning by vehicle purpose (a sedan, wagon, van, bus, etc);</span>
<span style="left:74px;top:196px;font-family:'DejaVu Sans Condensed', 'DejaVu Sans', 'Liberation Sans', sans-serif;font-size:12.6px;line-height:16px;color:#000;letter-spacing:-0.027px;">Decide on a desired brand and model of vehicle for your company (expediency of purchasing certain brands may be motivated by tax privileges</span>
<span style="left:74px;top:212px;font-family:'DejaVu Sans Condensed', 'DejaVu Sans', 'Liberation Sans', sans-serif;font-size:12.6px;line-height:16px;color:#000;letter-spacing:-0.008px;">that a government may provide for those who buy domestically produced brands);</span>
<span style="left:74px;top:244px;font-family:'DejaVu Sans Condensed', 'DejaVu Sans', 'Liberation Sans', sans-serif;font-size:12.6px;line-height:16px;color:#000;letter-spacing:0.005px;">When selecting a car you may need to consider the following points:</span>
<span style="left:37px;top:275px;font-family:'DejaVu Sans Condensed', 'DejaVu Sans', 'Liberation Sans', sans-serif;font-size:12.6px;line-height:16px;color:#800080;">o</span>
<span style="left:93px;top:275px;font-family:'DejaVu Sans Condensed', 'DejaVu Sans', 'Liberation Sans', sans-serif;font-size:12.6px;line-height:16px;color:#800080;letter-spacing:-0.008px;">Newly produced or used vehicle;</span>
<span style="left:37px;top:291px;font-family:'DejaVu Sans Condensed', 'DejaVu Sans', 'Liberation Sans', sans-serif;font-size:12.6px;line-height:16px;color:#800080;">o</span>
<span style="left:93px;top:291px;font-family:'DejaVu Sans Condensed', 'DejaVu Sans', 'Liberation Sans', sans-serif;font-size:12.6px;line-height:16px;color:#800080;letter-spacing:0.019px;">Fuel consumption (efficiency rate);</span>
<span style="left:37px;top:307px;font-family:'DejaVu Sans Condensed', 'DejaVu Sans', 'Liberation Sans', sans-serif;font-size:12.6px;line-height:16px;color:#800080;">o</span>
<span style="left:93px;top:307px;font-family:'DejaVu Sans Condensed', 'DejaVu Sans', 'Liberation Sans', sans-serif;font-size:12.6px;line-height:16px;color:#800080;letter-spacing:0.032px;">Critical features (for example a cargo capacity);</span>
<span style="left:37px;top:323px;font-family:'DejaVu Sans Condensed', 'DejaVu Sans', 'Liberation Sans', sans-serif;font-size:12.6px;line-height:16px;color:#800080;">o</span>
<span style="left:93px;top:323px;font-family:'DejaVu Sans Condensed', 'DejaVu Sans', 'Liberation Sans', sans-serif;font-size:12.6px;line-height:16px;color:#800080;letter-spacing:0.067px;">Low carbon dioxide emissions (the lower CO2, the</span>
<span style="left:37px;top:339px;font-family:'DejaVu Sans Condensed', 'DejaVu Sans', 'Liberation Sans', sans-serif;font-size:12.6px;line-height:16px;color:#800080;letter-spacing:0.030px;">lower taxation);</span>
<span style="left:74px;top:361px;font-family:'DejaVu Sans Condensed', 'DejaVu Sans', 'Liberation Sans', sans-serif;font-size:12.6px;line-height:16px;color:#000;letter-spacing:-0.006px;">Monitor the vendors to check the proposed prices for a desired kind of vehicle, and then check the company's budget to know whether</span>
<span style="left:74px;top:377px;font-family:'DejaVu Sans Condensed', 'DejaVu Sans', 'Liberation Sans', sans-serif;font-size:12.6px;line-height:16px;color:#000;letter-spacing:-0.012px;">necessary funds can be provided;</span>
<span style="left:74px;top:409px;font-family:'DejaVu Sans Condensed', 'DejaVu Sans', 'Liberation Sans', sans-serif;font-size:12.6px;line-height:16px;color:#000;letter-spacing:0.028px;">Select additional options and features - color, tyres, equipment, interior materials, etc;</span>
<span style="left:74px;top:449px;font-family:'DejaVu Sans Condensed', 'DejaVu Sans', 'Liberation Sans', sans-serif;font-size:12.6px;line-height:16px;color:#000;letter-spacing:0.041px;">Deal up with the best vendor (arrange a tender if it is required by laws or company regulations);</span>
<span style="left:19px;top:481px;font-family:'DejaVu Sans Condensed', 'DejaVu Sans', 'Liberation Sans', sans-serif;font-size:12.6px;line-height:16px;color:#c8c8c8;letter-spacing:-0.002px;">Category: Maintaining Company Vehicle</span>
<span style="left:74px;top:510px;font-family:'DejaVu Sans Condensed', 'DejaVu Sans', 'Liberation Sans', sans-serif;font-size:12.6px;line-height:16px;color:#000;letter-spacing:-0.004px;">A company needs to inspect its working vehicles daily. Correct exploitation of a vehicle means that it is:</span>
<span style="left:37px;top:541px;font-family:'DejaVu Sans Condensed', 'DejaVu Sans', 'Liberation Sans', sans-serif;font-size:12.6px;line-height:16px;color:#800080;">o</span>
<span style="left:93px;top:541px;font-family:'DejaVu Sans Condensed', 'DejaVu Sans', 'Liberation Sans', sans-serif;font-size:12.6px;line-height:16px;color:#800080;letter-spacing:0.019px;">Roadworthy (it’s in good working condition);</span>
<span style="left:37px;top:557px;font-family:'DejaVu Sans Condensed', 'DejaVu Sans', 'Liberation Sans', sans-serif;font-size:12.6px;line-height:16px;color:#800080;">o</span>
<span style="left:93px;top:557px;font-family:'DejaVu Sans Condensed', 'DejaVu Sans', 'Liberation Sans', sans-serif;font-size:12.6px;line-height:16px;color:#800080;letter-spacing:0.046px;">Safe to drive (all safety options are operational);</span>
<span style="left:37px;top:573px;font-family:'DejaVu Sans Condensed', 'DejaVu Sans', 'Liberation Sans', sans-serif;font-size:12.6px;line-height:16px;color:#800080;">o</span>
<span style="left:93px;top:573px;font-family:'DejaVu Sans Condensed', 'DejaVu Sans', 'Liberation Sans', sans-serif;font-size:12.6px;line-height:16px;color:#800080;letter-spacing:-0.028px;">Properly equipped (a vehicle suits the tasks it is intended</span>
<span style="left:37px;top:589px;font-family:'DejaVu Sans Condensed', 'DejaVu Sans', 'Liberation Sans', sans-serif;font-size:12.6px;line-height:16px;color:#800080;letter-spacing:0.297px;">for);</span>
<span style="left:37px;top:605px;font-family:'DejaVu Sans Condensed', 'DejaVu Sans', 'Liberation Sans', sans-serif;font-size:12.6px;line-height:16px;color:#800080;">o</span>
<span style="left:93px;top:605px;font-family:'DejaVu Sans Condensed', 'DejaVu Sans', 'Liberation Sans', sans-serif;font-size:12.6px;line-height:16px;color:#800080;letter-spacing:-0.025px;">Legal to drive (its suitability and its cargo are approved</span>
<span style="left:37px;top:621px;font-family:'DejaVu Sans Condensed', 'DejaVu Sans', 'Liberation Sans', sans-serif;font-size:12.6px;line-height:16px;color:#800080;letter-spacing:-0.062px;">by documents);</span>
<span style="left:74px;top:643px;font-family:'DejaVu Sans Condensed', 'DejaVu Sans', 'Liberation Sans', sans-serif;font-size:12.6px;line-height:16px;color:#000;letter-spacing:-0.025px;">Every time, before using your company vehicle (before leaving the corporate location) you need to check visual condition and cleanness of the</span>
<span style="left:74px;top:659px;font-family:'DejaVu Sans Condensed', 'DejaVu Sans', 'Liberation Sans', sans-serif;font-size:12.6px;line-height:16px;color:#000;letter-spacing:0.020px;">vehicle's body, windscreen, windows and lights;</span>
<span style="left:74px;top:691px;font-family:'DejaVu Sans Condensed', 'DejaVu Sans', 'Liberation Sans', sans-serif;font-size:12.6px;line-height:16px;color:#000;letter-spacing:-0.006px;">Make sure that the number plate is clean and properly lighted, and a tax disk is visible;</span>
<span style="left:74px;top:731px;font-family:'DejaVu Sans Condensed', 'DejaVu Sans', 'Liberation Sans', sans-serif;font-size:12.6px;line-height:16px;color:#000;letter-spacing:0.002px;">Examine the tyres (inflation, tread depth, tyre wear) and check availability of spares;</span>
<span style="left:74px;top:771px;font-family:'DejaVu Sans Condensed', 'DejaVu Sans', 'Liberation Sans', sans-serif;font-size:12.6px;line-height:16px;color:#000;letter-spacing:0.022px;">Check the engine and fluids levels (fuel, oil, coolant, brake/clutch, power steering, battery);</span>
<span style="left:74px;top:811px;font-family:'DejaVu Sans Condensed', 'DejaVu Sans', 'Liberation Sans', sans-serif;font-size:12.6px;line-height:16px;color:#000;letter-spacing:0.007px;">Inspect the vehicle around to look for any detectable oil or water leaks;</span>
<span style="left:74px;top:851px;font-family:'DejaVu Sans Condensed', 'DejaVu Sans', 'Liberation Sans', sans-serif;font-size:12.6px;line-height:16px;color:#000;letter-spacing:0.040px;">Check the condition of cargo equipment (trailer, roof-rack, etc) to ensure security of load;</span>
<span style="left:74px;top:891px;font-family:'DejaVu Sans Condensed', 'DejaVu Sans', 'Liberation Sans', sans-serif;font-size:12.6px;line-height:16px;color:#000;letter-spacing:-0.015px;">Inspect availability of supportive items: toolbox contents, extinguisher, first-aid kit, spares, etc;</span>
<span style="left:76px;top:925px;font-family:'DejaVu Sans Condensed', 'DejaVu Sans', 'Liberation Sans', sans-serif;font-size:12.6px;line-height:16px;color:#000;letter-spacing:0.064px;">Count: 18</span>
<span style="left:926px;top:79px;font-family:'DejaVu Sans Condensed', 'DejaVu Sans', 'Liberation Sans', sans-serif;font-size:11px;line-height:16px;color:#000;letter-spacing:-0.263px;">Categories Bar</span>
<span style="left:1236px;top:130px;font-family:'DejaVu Sans Condensed', 'DejaVu Sans', 'Liberation Sans', sans-serif;font-size:11px;line-height:16px;color:#000;letter-spacing:1.552px;">J...</span>
<span style="left:1258px;top:130px;font-family:'DejaVu Sans Condensed', 'DejaVu Sans', 'Liberation Sans', sans-serif;font-size:11px;line-height:16px;color:#000;letter-spacing:0.276px;">T...</span>
<span style="left:964px;top:147px;font-family:'DejaVu Sans Condensed', 'DejaVu Sans', 'Liberation Sans', sans-serif;font-size:11px;line-height:16px;color:#000;letter-spacing:-0.329px;">Buying Company Vehicle</span>
<span style="left:1247px;top:147px;font-family:'DejaVu Sans Condensed', 'DejaVu Sans', 'Liberation Sans', sans-serif;font-size:11px;line-height:16px;color:#000;">6</span>
<span style="left:1269px;top:147px;font-family:'DejaVu Sans Condensed', 'DejaVu Sans', 'Liberation Sans', sans-serif;font-size:11px;line-height:16px;color:#000;">6</span>
<span style="left:964px;top:165px;font-family:'DejaVu Sans Condensed', 'DejaVu Sans', 'Liberation Sans', sans-serif;font-size:11px;line-height:16px;color:#000;letter-spacing:-0.330px;">Maintaining Company Vehicle</span>
<span style="left:1242px;top:165px;font-family:'DejaVu Sans Condensed', 'DejaVu Sans', 'Liberation Sans', sans-serif;font-size:11px;line-height:16px;color:#000;">12</span>
<span style="left:1264px;top:165px;font-family:'DejaVu Sans Condensed', 'DejaVu Sans', 'Liberation Sans', sans-serif;font-size:11px;line-height:16px;color:#000;">12</span>
<span style="left:926px;top:404px;font-family:'DejaVu Sans Condensed', 'DejaVu Sans', 'Liberation Sans', sans-serif;font-size:11px;line-height:16px;color:#000;letter-spacing:-0.266px;">Filters Bar</span>
<span style="left:934px;top:430px;font-family:'Liberation Sans', 'DejaVu Sans', sans-serif;font-size:12.3px;line-height:16px;color:#6f93b6;letter-spacing:-0.275px;">Custom</span>
<span style="left:939px;top:456px;font-family:'DejaVu Sans Condensed', 'DejaVu Sans', 'Liberation Sans', sans-serif;font-size:11px;line-height:16px;color:#000;letter-spacing:-0.410px;">Completion</span>
<span style="left:939px;top:477px;font-family:'DejaVu Sans Condensed', 'DejaVu Sans', 'Liberation Sans', sans-serif;font-size:11px;line-height:16px;color:#000;letter-spacing:-0.257px;">Due Date</span>
<span style="left:939px;top:498px;font-family:'DejaVu Sans Condensed', 'DejaVu Sans', 'Liberation Sans', sans-serif;font-size:11px;line-height:16px;color:#000;letter-spacing:0.091px;">Status</span>
<span style="left:939px;top:519px;font-family:'DejaVu Sans Condensed', 'DejaVu Sans', 'Liberation Sans', sans-serif;font-size:11px;line-height:16px;color:#000;letter-spacing:-0.172px;">Priority</span>
<span style="left:939px;top:540px;font-family:'DejaVu Sans Condensed', 'DejaVu Sans', 'Liberation Sans', sans-serif;font-size:11px;line-height:16px;color:#000;letter-spacing:-0.189px;">Task Name</span>
<span style="left:939px;top:561px;font-family:'DejaVu Sans Condensed', 'DejaVu Sans', 'Liberation Sans', sans-serif;font-size:11px;line-height:16px;color:#000;letter-spacing:-0.087px;">Date Created</span>
<span style="left:939px;top:582px;font-family:'DejaVu Sans Condensed', 'DejaVu Sans', 'Liberation Sans', sans-serif;font-size:11px;line-height:16px;color:#000;letter-spacing:-0.345px;">Date Last Modifie</span>
<span style="left:939px;top:603px;font-family:'DejaVu Sans Condensed', 'DejaVu Sans', 'Liberation Sans', sans-serif;font-size:11px;line-height:16px;color:#000;letter-spacing:-0.161px;">Date Opened</span>
<span style="left:939px;top:624px;font-family:'DejaVu Sans Condensed', 'DejaVu Sans', 'Liberation Sans', sans-serif;font-size:11px;line-height:16px;color:#000;letter-spacing:-0.291px;">Date Completed</span>
<span style="left:1130px;top:925px;font-family:'Liberation Mono', 'DejaVu Sans Mono', monospace;font-size:14px;line-height:18px;color:#000;font-weight:bold;letter-spacing:0.572px;">todolistsoft.com</span>
</div></body></html>
